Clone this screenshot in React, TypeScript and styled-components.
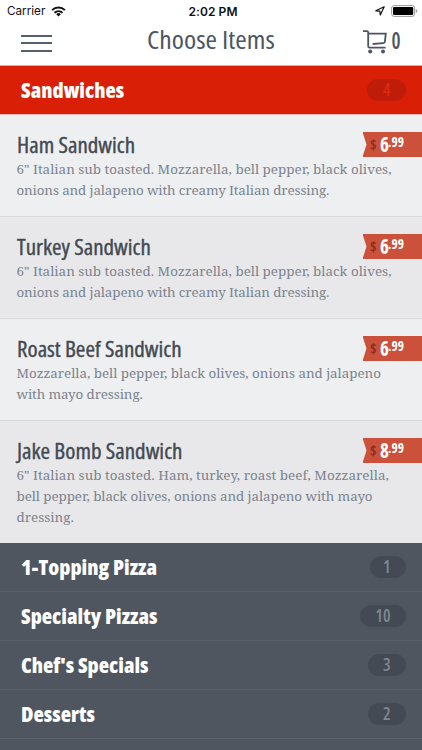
import React from 'react';
import styled, { createGlobalStyle } from 'styled-components';

const GlobalStyle = createGlobalStyle`
  * { box-sizing: border-box; }
  body { margin: 0; background: #4f565f; overflow: hidden; }
`;

const Screen = styled.div`
  width: 422px;
  height: 750px;
  overflow: hidden;
  background: #4f565f;
  font-family: "Open Sans", "Noto Sans", sans-serif;
`;

const Header = styled.header`
  height: 65.5px;
  background: #fff;
  border-bottom: 1px solid #e9a59c;
`;

const StatusBar = styled.div`
  display: grid;
  grid-template-columns: 1fr auto 1fr;
  align-items: center;
  height: 22px;
  padding: 0 4px 0 7px;
  color: #111;
  font-family: Inter, sans-serif;
  font-size: 11.7px;
`;

const StatusGroup = styled.div<{ $end?: boolean }>`
  display: flex;
  align-items: center;
  justify-content: ${(p) => (p.$end ? 'flex-end' : 'flex-start')};
  gap: 6px;
`;

const Clock = styled.div`
  font-weight: 600;
  font-size: 12px;
  letter-spacing: 0.1px;
  padding-left: 1px;
`;

const NavBar = styled.div`
  display: grid;
  grid-template-columns: 1fr auto 1fr;
  align-items: center;
  height: 42px;
  padding: 0 20.5px;
  color: #4d5560;
`;

const MenuButton = styled.button`
  display: flex;
  flex-direction: column;
  justify-content: space-between;
  width: 31px;
  height: 17px;
  padding: 0;
  border: 0;
  background: none;
`;

const MenuLine = styled.span`
  height: 2px;
  background: #56606b;
`;

const Title = styled.h1`
  margin: -8px 0 0;
  font-size: 26px;
  line-height: 34px;
  font-weight: 400;
  font-stretch: 75%;
  transform: scaleX(1.065);
`;

const CartButton = styled.button`
  display: flex;
  align-items: center;
  justify-self: end;
  gap: 4px;
  margin-top: -2px;
  padding: 0;
  border: 0;
  background: none;
  color: #4d5560;
`;

const CartCount = styled.span`
  margin-top: -4px;
  font: 600 23px/26px "Open Sans", sans-serif;
  font-stretch: 75%;
  transform: scaleX(0.88);
`;

const Category = styled.div<{ $active?: boolean }>`
  display: flex;
  align-items: center;
  justify-content: space-between;
  height: 49px;
  padding: 0 16px 0 20.5px;
  color: #fff;
  background: ${(p) => (p.$active ? '#d91f06' : '#4f565f')};
  border-bottom: 1px solid ${(p) => (p.$active ? '#efb9b2' : '#59616a')};
`;

const CategoryName = styled.h2`
  margin: 0;
  font-size: 21px;
  line-height: 28px;
  font-weight: 800;
  font-stretch: 75%;
  transform: scaleX(1.015);
  transform-origin: left;
`;

const Count = styled.span<{ $active?: boolean; $width: number }>`
  width: ${(p) => p.$width}px;
  height: 22px;
  padding-right: 15.5px;
  border-radius: 11px;
  text-align: right;
  font-size: 17px;
  line-height: 22px;
  font-weight: 600;
  font-stretch: 75%;
  color: ${(p) => (p.$active ? '#dc2b14' : '#7d8792')};
  background: ${(p) => (p.$active ? '#bf1d09' : '#434a53')};
`;

const Item = styled.article<{ $alt?: boolean; $tall?: boolean }>`
  display: flex;
  flex-direction: column;
  height: ${(p) => (p.$tall ? 122.5 : 102)}px;
  padding: 16.5px 0 0 16.5px;
  background: ${(p) => (p.$alt ? '#e8e8ea' : '#eeeff1')};
  border-bottom: ${(p) => (p.$tall ? 0 : 1)}px solid #d9dadd;
`;

const ItemTop = styled.div`
  display: flex;
  justify-content: space-between;
  height: 27.5px;
`;

const ItemName = styled.h3`
  margin: 0;
  font-size: 21px;
  line-height: 28px;
  font-weight: 400;
  font-stretch: 75%;
  color: #434a52;
  -webkit-text-stroke: 0.35px #434a52;
  transform: scaleX(1.098);
  transform-origin: left;
`;

const PriceTag = styled.div`
  display: flex;
  width: 59.5px;
  height: 25px;
  padding-left: 7.5px;
  margin-top: 1px;
  color: #fff;
  background: #cb513a;
  clip-path: polygon(0 0, 100% 0, 100% 100%, 0 100%, 4px 50%);
`;

const Currency = styled.span`
  width: 9.5px;
  font-size: 14px;
  line-height: 25px;
  font-weight: 700;
  font-stretch: 75%;
  color: #8b2f20;
`;

const Dollars = styled.span`
  width: 8px;
  font-size: 21px;
  line-height: 25px;
  font-weight: 700;
  font-stretch: 75%;
  transform: scaleX(0.9);
  transform-origin: left;
`;

const Cents = styled.span`
  font-size: 14px;
  line-height: 19px;
  font-weight: 700;
  font-stretch: 75%;
  transform: scaleX(0.95);
  transform-origin: left;
`;

const Description = styled.p`
  margin: 0;
  font-family: "Noto Serif", "DejaVu Serif", serif;
  font-size: 13.4px;
  line-height: 21px;
  color: #7b838e;
`;

const Line = styled.span<{ $tracking?: number }>`
  display: block;
  white-space: nowrap;
  letter-spacing: ${(p) => p.$tracking ?? 0}px;
`;

type TextLine = { text: string; tracking?: number };
type MenuItem = { name: string; price: string; lines: TextLine[] };

const italianSub: TextLine[] = [
  { text: '6" Italian sub toasted. Mozzarella, bell pepper, black olives,', tracking: 0.01 },
  { text: 'onions and jalapeno with creamy Italian dressing.', tracking: -0.125 },
];

const items: MenuItem[] = [
  { name: 'Ham Sandwich', price: '6', lines: italianSub },
  { name: 'Turkey Sandwich', price: '6', lines: italianSub },
  {
    name: 'Roast Beef Sandwich',
    price: '6',
    lines: [
      { text: 'Mozzarella, bell pepper, black olives, onions and jalapeno', tracking: -0.035 },
      { text: 'with mayo dressing.', tracking: -0.12 },
    ],
  },
  {
    name: 'Jake Bomb Sandwich',
    price: '8',
    lines: [
      { text: '6" Italian sub toasted. Ham, turkey, roast beef, Mozzarella,', tracking: 0.035 },
      { text: 'bell pepper, black olives, onions and jalapeno with mayo', tracking: -0.07 },
      { text: 'dressing.' },
    ],
  },
];

const categories = [
  { name: '1-Topping Pizza', count: 1, width: 36 },
  { name: 'Specialty Pizzas', count: 10, width: 46 },
  { name: "Chef's Specials", count: 3, width: 38 },
  { name: 'Desserts', count: 2, width: 38 },
];

const WifiIcon = () => (
  <svg width="15" height="11" viewBox="0 0 14 11" fill="none" stroke="#111" strokeWidth="2">
    <path d="M.6 4.1a9.2 9.2 0 0 1 12.8 0M3 6.7a5.9 5.9 0 0 1 8 0" />
    <path d="M7 10.6 4.7 8.3a3.2 3.2 0 0 1 4.6 0z" fill="#111" stroke="none" />
  </svg>
);

const LocationIcon = () => (
  <svg width="10" height="10" viewBox="0 0 10 10" fill="none" stroke="#111" strokeWidth="1.2">
    <path d="M9.2.8 5.3 9 4.8 5.2.8 4.8z" strokeLinejoin="round" />
  </svg>
);

const BatteryIcon = () => (
  <svg width="27" height="12" viewBox="0 0 27 12">
    <rect x=".6" y=".6" width="23" height="10.8" rx="2.6" fill="none" stroke="#999" />
    <rect x="2" y="2" width="20.2" height="8" rx="1.3" fill="#000" />
    <path d="M24.8 4v4c1.9-.6 1.9-3.4 0-4z" fill="#999" />
  </svg>
);

const CartIcon = () => (
  <svg width="24" height="24" viewBox="0 0 24 24" fill="none" stroke="#4d5560" strokeWidth="1.8">
    <path d="M0 1.2h3.8q1.4 0 1.4 1.4v13.6q0 1.4 1.4 1.4h16M5.2 3.6h17.6l-.9 8q-.2 1.4-1.5 1.5l-10.8.9" />
    <circle cx="7.2" cy="21.4" r="2" fill="#4d5560" stroke="none" />
    <circle cx="20" cy="21.4" r="2" fill="#4d5560" stroke="none" />
  </svg>
);

export default function App() {
  return (
    <Screen>
      <GlobalStyle />
      <Header>
        <StatusBar>
          <StatusGroup>
            Carrier
            <WifiIcon />
          </StatusGroup>
          <Clock>2:02 PM</Clock>
          <StatusGroup $end>
            <LocationIcon />
            <BatteryIcon />
          </StatusGroup>
        </StatusBar>
        <NavBar>
          <MenuButton aria-label="Menu">
            <MenuLine />
            <MenuLine />
            <MenuLine />
          </MenuButton>
          <Title>Choose Items</Title>
          <CartButton aria-label="Cart">
            <CartIcon />
            <CartCount>0</CartCount>
          </CartButton>
        </NavBar>
      </Header>
      <Category $active>
        <CategoryName>Sandwiches</CategoryName>
        <Count $active $width={39}>4</Count>
      </Category>
      {items.map((item, i) => (
        <Item key={item.name} $alt={i % 2 === 1} $tall={item.lines.length > 2}>
          <ItemTop>
            <ItemName>{item.name}</ItemName>
            <PriceTag>
              <Currency>$</Currency>
              <Dollars>{item.price}</Dollars>
              <Cents>.99</Cents>
            </PriceTag>
          </ItemTop>
          <Description>
            {item.lines.map((line) => (
              <Line key={line.text} $tracking={line.tracking}>{line.text}</Line>
            ))}
          </Description>
        </Item>
      ))}
      {categories.map((c) => (
        <Category key={c.name}>
          <CategoryName>{c.name}</CategoryName>
          <Count $width={c.width}>{c.count}</Count>
        </Category>
      ))}
    </Screen>
  );
}
